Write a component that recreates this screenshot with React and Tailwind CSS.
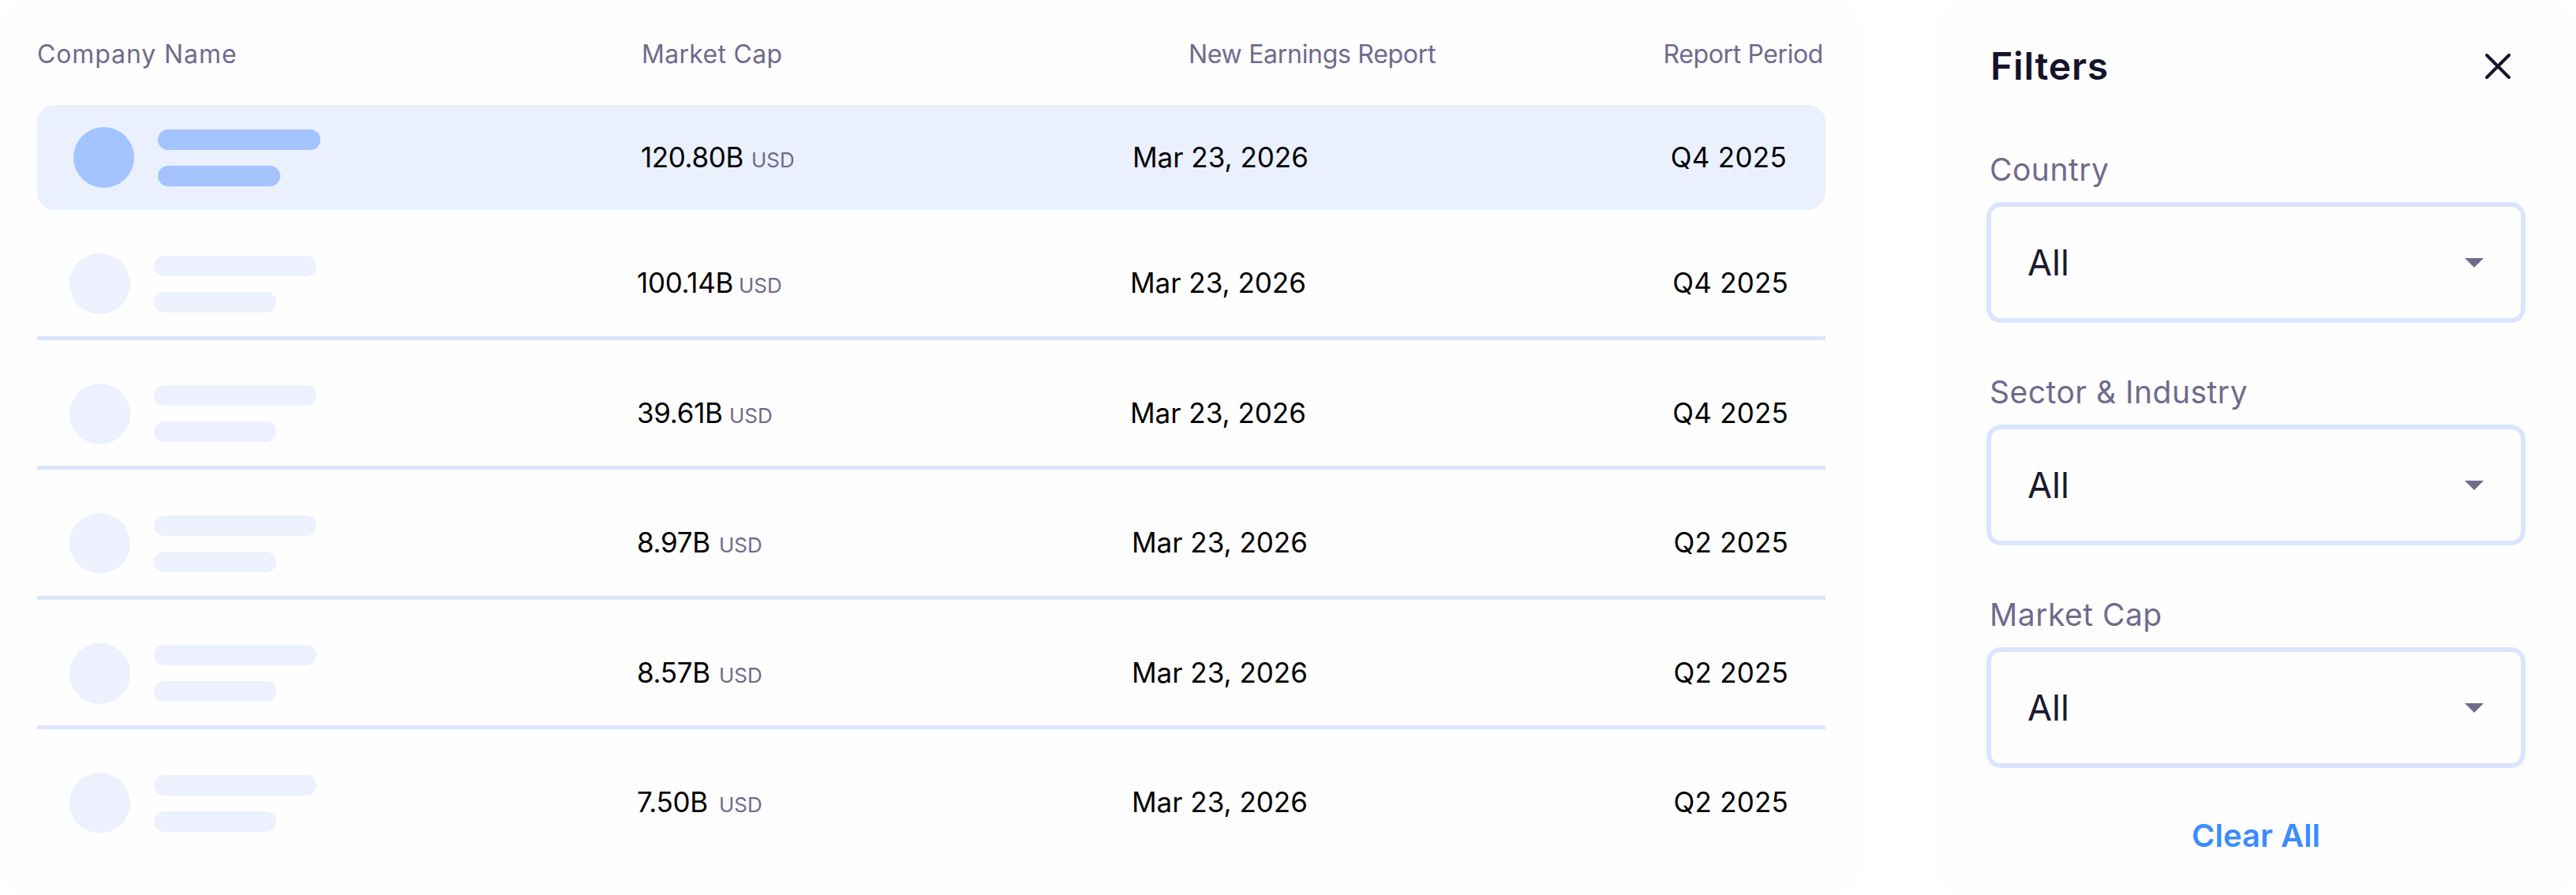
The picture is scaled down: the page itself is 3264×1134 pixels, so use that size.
const FONT = "font-['Inter','Noto_Sans',sans-serif]";

const rows = [
  { value: "120.80B", width: "w-[140px]", period: "Q4 2025", active: true },
  { value: "100.14B", width: "w-[129px]", period: "Q4 2025", dateWidth: "w-[625px]" },
  { value: "39.61B", width: "w-[117px]", period: "Q4 2025", dateWidth: "w-[625px]" },
  { value: "8.97B", width: "w-[104px]", period: "Q2 2025" },
  { value: "8.57B", width: "w-[104px]", period: "Q2 2025" },
  { value: "7.50B", width: "w-[104px]", period: "Q2 2025", last: true },
];

function Row({ row }) {
  if (row.active) {
    return (
      <div className="flex items-center h-[133px] rounded-[22px] bg-[#ebf0ff] pl-[46px] pr-[49px]">
        <div className="w-[719px] flex items-center gap-[30px]">
          <div className="w-[77px] h-[77px] rounded-full bg-[#a3c4ff]" />
          <div className="flex flex-col gap-[20px]">
            <div className="w-[206px] h-[26px] rounded-full bg-[#a3c4ff]" />
            <div className="w-[155px] h-[26px] rounded-full bg-[#a3c4ff]" />
          </div>
        </div>
        <div className="w-[623px] flex items-baseline">
          <span className={`${row.width} text-[35px] tracking-[-0.4px] text-black`}>{row.value}</span>
          <span className="text-[26px] text-[#6f6b8c]">USD</span>
        </div>
        <div className="text-[35px] text-black">Mar 23, 2026</div>
        <div className="flex-1 text-right text-[35px] tracking-[0.3px] text-black">{row.period}</div>
      </div>
    );
  }
  return (
    <div className={`flex items-center pt-[55px] pb-[27.5px] pl-[41px] pr-[47px] ${row.last ? "" : "border-b-[5px] border-[#dbe5fd]"}`}>
      <div className="w-[719px] flex items-center gap-[30px]">
        <div className="w-[77px] h-[77px] rounded-full bg-[#edf1fe]" />
        <div className="flex flex-col gap-[20px]">
          <div className="w-[206px] h-[26px] rounded-full bg-[#edf1fe]" />
          <div className="w-[155px] h-[26px] rounded-full bg-[#edf1fe]" />
        </div>
      </div>
      <div className={`${row.dateWidth || "w-[627px]"} flex items-baseline mb-[2px]`}>
        <span className={`${row.width} text-[35px] tracking-[-0.3px] text-black`}>{row.value}</span>
        <span className="text-[26px] text-[#6f6b8c]">USD</span>
      </div>
      <div className="text-[35px] text-black mb-[2px]">Mar 23, 2026</div>
      <div className="flex-1 text-right text-[35px] tracking-[0.2px] text-black mb-[2px]">{row.period}</div>
    </div>
  );
}

function Select({ label }) {
  return (
    <div className="flex flex-col">
      <div className="pl-[4px] text-[39px] tracking-[0.5px] leading-[57px] text-[#6f6b8c]">{label}</div>
      <div className="mt-[13px] h-[153px] rounded-[18px] border-[6px] border-[#dbe5fd] flex items-center justify-between pl-[46px] pr-[47px]">
        <span className="text-[45px] text-[#1a1a2e]">All</span>
        <svg width="24" height="12" viewBox="0 0 24 12"><path d="M0 0H24L12 12Z" fill="#6f6b8c" /></svg>
      </div>
    </div>
  );
}

export default function App() {
  return (
    <div className={`flex justify-between h-[1134px] w-full bg-white ${FONT}`}>
      <div className="w-[2360px] h-[1134px] bg-[#fefefe] rounded-[40px] pl-[47px] pr-[47px]">
        <div className="flex h-[133px] items-center pt-[4px] text-[#6f6b8c] text-[32px]">
          <div className="w-[766px] tracking-[0.9px]">Company Name</div>
          <div className="w-[693px] tracking-[0.3px]">Market Cap</div>
          <div className="tracking-[-0.3px]">New Earnings Report</div>
          <div className="flex-1 text-right pr-[3px] tracking-[-0.4px]">Report Period</div>
        </div>
        {rows.map((row) => (
          <Row key={row.value} row={row} />
        ))}
      </div>
      <div className="w-[814px] h-[1134px] bg-[#fefefe] rounded-[40px] pl-[67px] pr-[64px] pt-[51px] flex flex-col">
        <div className="flex items-center justify-between pl-[5px] pr-[19px] h-[66px]">
          <h2 className="text-[48px] tracking-[0.8px] font-semibold text-[#14132a]">Filters</h2>
          <svg width="32" height="32" viewBox="0 0 32 32" fill="none" stroke="#14132a" strokeWidth="4" strokeLinecap="round">
            <path d="M2 2L30 30M30 2L2 30" />
          </svg>
        </div>
        <div className="mt-[69px] flex flex-col gap-[59px]">
          <Select label="Country" />
          <Select label="Sector & Industry" />
          <Select label="Market Cap" />
        </div>
        <div className="mt-[56px] text-center text-[40px] font-semibold text-[#3b8cff]">Clear All</div>
      </div>
    </div>
  );
}
